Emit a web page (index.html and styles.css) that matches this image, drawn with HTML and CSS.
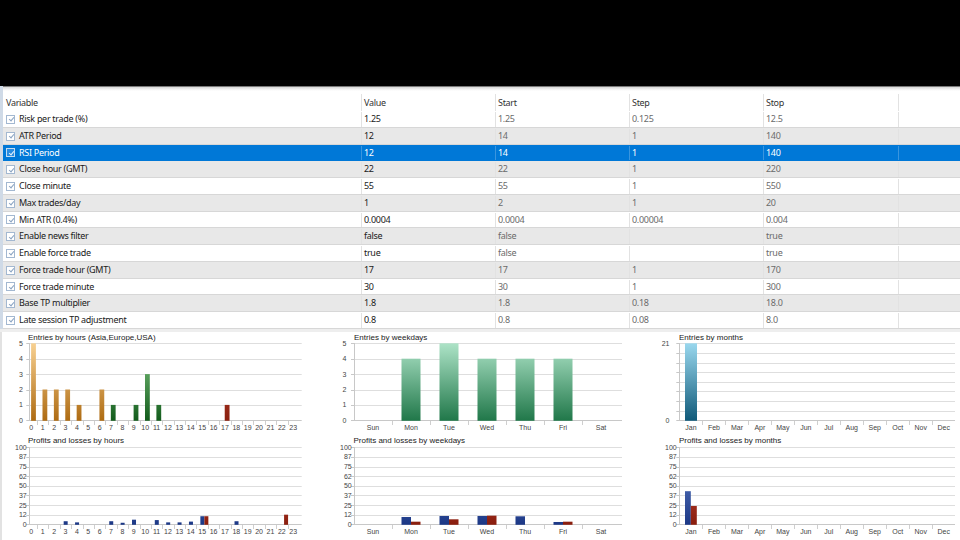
FILE: index.html
```html
<!DOCTYPE html>
<html>
<head>
<meta charset="utf-8">
<link rel="stylesheet" href="styles.css">
</head>
<body>
<div class="topbar"></div>
<div class="table-wrap">
  <div class="band"></div>
  <div class="row head">
    <div class="cell">Variable</div><div class="cell">Value</div><div class="cell">Start</div><div class="cell">Step</div><div class="cell">Stop</div><div class="cell"></div>
  </div>
  <div class="row"><div class="cell"><span class="cb"></span>Risk per trade (%)</div><div class="cell v">1.25</div><div class="cell g">1.25</div><div class="cell g">0.125</div><div class="cell g">12.5</div><div class="cell"></div></div>
  <div class="row alt"><div class="cell"><span class="cb"></span>ATR Period</div><div class="cell v">12</div><div class="cell g">14</div><div class="cell g">1</div><div class="cell g">140</div><div class="cell"></div></div>
  <div class="row sel"><div class="cell"><span class="cb"></span>RSI Period</div><div class="cell v">12</div><div class="cell g">14</div><div class="cell g">1</div><div class="cell g">140</div><div class="cell"></div></div>
  <div class="row alt"><div class="cell"><span class="cb"></span>Close hour (GMT)</div><div class="cell v">22</div><div class="cell g">22</div><div class="cell g">1</div><div class="cell g">220</div><div class="cell"></div></div>
  <div class="row"><div class="cell"><span class="cb"></span>Close minute</div><div class="cell v">55</div><div class="cell g">55</div><div class="cell g">1</div><div class="cell g">550</div><div class="cell"></div></div>
  <div class="row alt"><div class="cell"><span class="cb"></span>Max trades/day</div><div class="cell v">1</div><div class="cell g">2</div><div class="cell g">1</div><div class="cell g">20</div><div class="cell"></div></div>
  <div class="row"><div class="cell"><span class="cb"></span>Min ATR (0.4%)</div><div class="cell v">0.0004</div><div class="cell g">0.0004</div><div class="cell g">0.00004</div><div class="cell g">0.004</div><div class="cell"></div></div>
  <div class="row alt"><div class="cell"><span class="cb"></span>Enable news filter</div><div class="cell v">false</div><div class="cell g">false</div><div class="cell g"></div><div class="cell g">true</div><div class="cell"></div></div>
  <div class="row"><div class="cell"><span class="cb"></span>Enable force trade</div><div class="cell v">true</div><div class="cell g">false</div><div class="cell g"></div><div class="cell g">true</div><div class="cell"></div></div>
  <div class="row alt"><div class="cell"><span class="cb"></span>Force trade hour (GMT)</div><div class="cell v">17</div><div class="cell g">17</div><div class="cell g">1</div><div class="cell g">170</div><div class="cell"></div></div>
  <div class="row"><div class="cell"><span class="cb"></span>Force trade minute</div><div class="cell v">30</div><div class="cell g">30</div><div class="cell g">1</div><div class="cell g">300</div><div class="cell"></div></div>
  <div class="row alt"><div class="cell"><span class="cb"></span>Base TP multiplier</div><div class="cell v">1.8</div><div class="cell g">1.8</div><div class="cell g">0.18</div><div class="cell g">18.0</div><div class="cell"></div></div>
  <div class="row"><div class="cell"><span class="cb"></span>Late session TP adjustment</div><div class="cell v">0.8</div><div class="cell g">0.8</div><div class="cell g">0.08</div><div class="cell g">8.0</div><div class="cell"></div></div>
</div>
<div class="splitter"></div>
<div class="charts">
  <svg class="chart" id="c1"></svg>
  <svg class="chart" id="c2"></svg>
  <svg class="chart" id="c3"></svg>
  <svg class="chart" id="c4"></svg>
  <svg class="chart" id="c5"></svg>
  <svg class="chart" id="c6"></svg>
</div>
<script src="script.js"></script>
</body>
</html>
```
FILE: styles.css
```css
html, body { margin: 0; padding: 0; }
body {
  width: 960px; height: 540px; overflow: hidden; background: #fff;
  font-family: "Noto Sans", "Open Sans", sans-serif;
  color: #1a1a1a;
}
.topbar { height: 86px; background: #000; }
.table-wrap { border-left: 3px solid #cfdae7; background: #fff; }
.band {
  height: 5px; box-sizing: border-box;
  border-top: 1px solid #7a7a7a;
  background: linear-gradient(#d6d6d6, #f6f6f6 70%, #fff);
}
.row {
  display: grid;
  grid-template-columns: 358px 134px 134px 134px 135px 1fr;
  height: 16.75px; box-sizing: border-box;
  border-bottom: 1px solid #d7d7d7;
  font-size: 9px; line-height: 14.75px; padding-top: 1px;
  letter-spacing: -0.3px;
}
.row.alt { background: #e8e8e8; }
.row.sel { background: #0078d7; color: #fff; border-bottom-color: #0078d7; }
.row.head { height: 20px; padding-top: 3px; line-height: 17px; border-bottom: none; color: #333; }
.cell {
  border-left: 1px solid #e2e2e2; padding-left: 2px;
  white-space: nowrap; overflow: hidden;
}
.row.sel .cell { border-left-color: #3a95de; }
.cell:first-child { border-left: none; padding-left: 3px; display: flex; align-items: center; }
.cell.g { color: #6b6b6b; }
.row.sel .cell.g { color: #fff; }
.cb {
  width: 9px; height: 9px; box-sizing: border-box; flex: none;
  border: 1px solid #a3b8d1; background: #fff; margin-right: 4px; position: relative;
}
.cb::after {
  content: ""; position: absolute; left: 2.6px; top: 0.6px; width: 1.8px; height: 4.2px;
  border: solid #8aa3c2; border-width: 0 1px 1px 0; transform: rotate(40deg);
}
.row.sel .cb { background: #2a8ce0; border-color: #c3dcf2; }
.row.sel .cb::after { border-color: #e6f2fc; }
.splitter { height: 3px; background: #eeeeee; }
.charts {
  display: grid;
  grid-template-columns: 318px 320px 320px;
  grid-template-rows: 100px 108px;
  border-left: 2px solid #e2e2e2;
  background: #fff;
}
.chart { display: block; }
.chart text { font-family: "Liberation Sans", Arial, sans-serif; font-size: 7px; fill: #444; }
.chart text.ttl { font-size: 8px; fill: #222; }
```
FILE: script.js
```js
(function () {
  var NS = 'http://www.w3.org/2000/svg';
  function el(tag, attrs, parent, txt) {
    var e = document.createElementNS(NS, tag);
    for (var k in attrs) e.setAttribute(k, attrs[k]);
    if (txt !== undefined) e.textContent = txt;
    if (parent) parent.appendChild(e);
    return e;
  }
  var GR = {
    orange: ['#f8d192', '#ae6b12'],
    green: ['#86cc86', '#135c1c'],
    red: ['#c84a36', '#8a2010'],
    wgreen: ['#ade3c7', '#21784a'],
    mblue: ['#9ad8ee', '#105a7a'],
    pblue: ['#6c8cd2', '#1c3886'],
    pred: ['#d45442', '#8a1e0e']
  };
  function chart(id, o) {
    var svg = document.getElementById(id);
    svg.setAttribute('viewBox', o.vx + ' 0 ' + o.vw + ' ' + o.h);
    svg.setAttribute('width', o.vw);
    svg.setAttribute('height', o.h);
    var defs = el('defs', {}, svg);
    Object.keys(GR).forEach(function (g) {
      var lg = el('linearGradient', { id: id + g, gradientUnits: 'userSpaceOnUse', x1: 0, y1: o.top, x2: 0, y2: o.bottom }, defs);
      el('stop', { offset: 0, 'stop-color': GR[g][0] }, lg);
      el('stop', { offset: 1, 'stop-color': GR[g][1] }, lg);
    });
    function Y(v) { return o.bottom - v / o.yMax * (o.bottom - o.top); }
    o.grid.forEach(function (v) {
      var y = Math.round(Y(v)) + 0.5;
      el('line', { x1: o.axisX, x2: o.right, y1: y, y2: y, stroke: v === 0 ? '#c8c8c8' : '#dedede', 'stroke-width': 1 }, svg);
      el('line', { x1: o.axisX - 3, x2: o.axisX, y1: y, y2: y, stroke: '#c8c8c8', 'stroke-width': 1 }, svg);
    });
    var ax = Math.round(o.axisX) + 0.5;
    el('line', { x1: ax, x2: ax, y1: Math.round(o.top), y2: Math.round(o.bottom) + 1, stroke: '#c8c8c8', 'stroke-width': 1 }, svg);
    o.yLabels.forEach(function (p) {
      el('text', { x: o.yLabelX, y: Y(p[0]) + 2.5, 'text-anchor': 'end' }, svg, p[1]);
    });
    o.cats.forEach(function (c, i) {
      el('text', { x: o.catX(i), y: o.xLabelY, 'text-anchor': 'middle' }, svg, c);
    });
    o.ticks.forEach(function (t) {
      var x = Math.round(t) + 0.5;
      el('line', { x1: x, x2: x, y1: Math.round(o.bottom) + 1, y2: Math.round(o.bottom) + 5, stroke: '#cfcfcf', 'stroke-width': 1 }, svg);
    });
    o.bars.forEach(function (b) {
      var y = Y(b.v);
      el('rect', { x: b.x, y: y, width: b.w, height: o.bottom - y + 0.5, fill: 'url(#' + id + b.c + ')' }, svg);
    });
    el('text', { 'class': 'ttl', x: o.titleX, y: o.titleY }, svg, o.title);
  }
  function range(n) { var a = []; for (var i = 0; i < n; i++) a.push(i); return a; }
  var hourX = function (i) { return 31.3 + i * 11.39; };
  var hours = range(24).map(String);
  var hourTicks = range(23).map(function (i) { return 37 + i * 11.39; });
  var wdX = function (i) { return 373 + i * 38; };
  var wd = ['Sun', 'Mon', 'Tue', 'Wed', 'Thu', 'Fri', 'Sat'];
  var wdTicks = range(6).map(function (i) { return 392 + i * 38; });
  var mX = function (i) { return 691 + i * 22.97; };
  var months = ['Jan', 'Feb', 'Mar', 'Apr', 'May', 'Jun', 'Jul', 'Aug', 'Sep', 'Oct', 'Nov', 'Dec'];
  var mTicks = range(11).map(function (i) { return 702.3 + i * 22.97; });

  var top = { h: 100, top: 11.3, bottom: 88.3, titleY: 8.3, xLabelY: 97.5 };
  var bot = { h: 108, top: 15.3, bottom: 92.3, titleY: 11, xLabelY: 101.5 };
  function merge(a, b) { var r = {}; for (var k in a) r[k] = a[k]; for (var k2 in b) r[k2] = b[k2]; return r; }

  var plGrid = [0, 12.5, 25, 37.5, 50, 62.5, 75, 87.5, 100];
  var plLabels = [[0, '0'], [12.5, '12'], [25, '25'], [37.5, '37'], [50, '50'], [62.5, '62'], [75, '75'], [87.5, '87'], [100, '100']];

  var hv = { 0: 5, 1: 2, 2: 2, 3: 2, 4: 1, 6: 2, 7: 1, 9: 1, 10: 3, 11: 1, 17: 1 };
  var hb = [];
  Object.keys(hv).forEach(function (k) {
    var i = +k;
    var c = i <= 6 ? 'orange' : (i <= 11 ? 'green' : 'red');
    hb.push({ x: hourX(i) - 0.2, w: 4.8, v: hv[k], c: c });
  });
  chart('c1', merge(top, {
    vx: 2, vw: 318, title: 'Entries by hours (Asia,Europe,USA)', titleX: 28,
    axisX: 29.3, right: 301.7, yMax: 5, grid: [0, 1, 2, 3, 4, 5],
    yLabels: [[0, '0'], [1, '1'], [2, '2'], [3, '3'], [4, '4'], [5, '5']], yLabelX: 23,
    cats: hours, catX: hourX, ticks: hourTicks, bars: hb
  }));

  var wv = [0, 4, 5, 4, 4, 4, 0];
  var wb = [];
  wv.forEach(function (v, i) { if (v) wb.push({ x: wdX(i) - 9.5, w: 19, v: v, c: 'wgreen' }); });
  chart('c2', merge(top, {
    vx: 320, vw: 320, title: 'Entries by weekdays', titleX: 354,
    axisX: 354, right: 622, yMax: 5, grid: [0, 1, 2, 3, 4, 5],
    yLabels: [[0, '0'], [1, '1'], [2, '2'], [3, '3'], [4, '4'], [5, '5']], yLabelX: 346.5,
    cats: wd, catX: wdX, ticks: wdTicks, bars: wb
  }));

  chart('c3', merge(top, {
    vx: 640, vw: 320, title: 'Entries by months', titleX: 679,
    axisX: 679.3, right: 955, yMax: 21, grid: range(9).map(function (i) { return i * 2.625; }),
    yLabels: [[0, '0'], [21, '21']], yLabelX: 669.5,
    cats: months, catX: mX, ticks: mTicks, bars: [{ x: 685, w: 12, v: 21, c: 'mblue' }]
  }));

  var pb = { 3: 4, 4: 2.5, 7: 4, 8: 2, 9: 6, 11: 5.5, 12: 2.5, 13: 2.5, 14: 3.5, 15: 10.5, 18: 4 };
  var pr = { 15: 10.5, 22: 12.5 };
  var pbars = [];
  Object.keys(pb).forEach(function (k) { pbars.push({ x: hourX(+k) - 1.8, w: 4, v: pb[k], c: 'pblue' }); });
  Object.keys(pr).forEach(function (k) { pbars.push({ x: hourX(+k) + 2.2, w: 4, v: pr[k], c: 'pred' }); });
  chart('c4', merge(bot, {
    vx: 2, vw: 318, title: 'Profits and losses by hours', titleX: 28,
    axisX: 29.3, right: 301.7, yMax: 100, grid: plGrid, yLabels: plLabels, yLabelX: 26.7,
    cats: hours, catX: hourX, ticks: hourTicks, bars: pbars
  }));

  var wbl = [0, 9.5, 10.8, 10.8, 10.4, 3, 0];
  var wrd = [0, 3.4, 6.5, 11.2, 0, 3.4, 0];
  var wpb = [];
  wbl.forEach(function (v, i) { if (v) wpb.push({ x: wdX(i) - 9.5, w: 9.5, v: v, c: 'pblue' }); });
  wrd.forEach(function (v, i) { if (v) wpb.push({ x: wdX(i), w: 9.5, v: v, c: 'pred' }); });
  chart('c5', merge(bot, {
    vx: 320, vw: 320, title: 'Profits and losses by weekdays', titleX: 353.5,
    axisX: 354, right: 622, yMax: 100, grid: plGrid, yLabels: plLabels, yLabelX: 351.7,
    cats: wd, catX: wdX, ticks: wdTicks, bars: wpb
  }));

  chart('c6', merge(bot, {
    vx: 640, vw: 320, title: 'Profits and losses by months', titleX: 679,
    axisX: 679.3, right: 955, yMax: 100, grid: plGrid, yLabels: plLabels, yLabelX: 676.7,
    cats: months, catX: mX, ticks: mTicks,
    bars: [{ x: 685, w: 5.8, v: 43, c: 'pblue' }, { x: 690.8, w: 6, v: 23.8, c: 'pred' }]
  }));
})();
```
